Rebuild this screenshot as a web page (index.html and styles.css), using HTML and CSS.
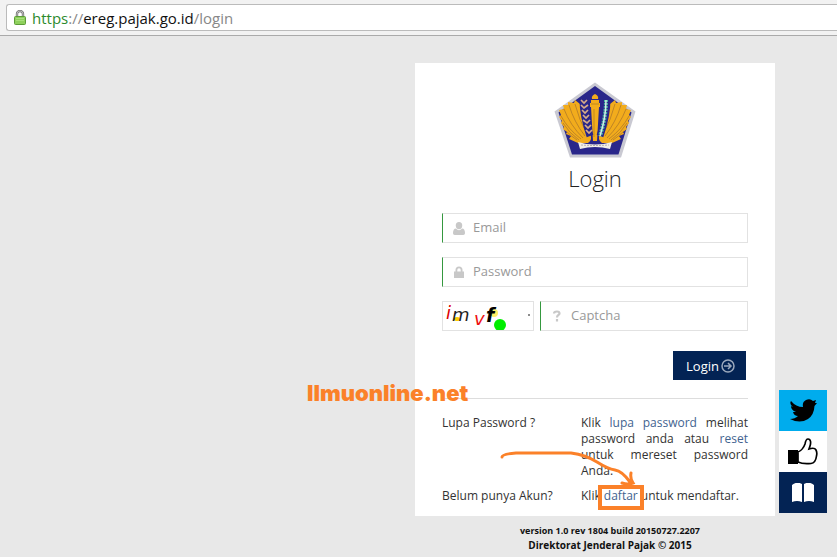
FILE: index.html
```html
<!DOCTYPE html>
<html lang="id">
<head>
<meta charset="utf-8">
<title>Login</title>
<link rel="stylesheet" href="styles.css">
</head>
<body>

<header class="browser-bar">
    <div class="address">
        <svg class="secure" width="12" height="15" viewBox="0 0 12 15">
            <path d="M3 7V4a3 3 0 0 1 6 0v3" fill="none" stroke="#777" stroke-width="2.4"/>
            <path d="M3 7V4a3 3 0 0 1 6 0v3" fill="none" stroke="#ccc" stroke-width="0.8"/>
            <rect x="0.5" y="6.5" width="11" height="8" rx="1" fill="#8ed05c" stroke="#5c9c38"/>
            <path d="M2 8.5h8M2 10.5h8" stroke="#a8e07c"/>
        </svg>
        <span class="url"><span class="scheme">https</span>://<span class="host">ereg.pajak.go.id</span>/login</span>
    </div>
</header>

<main class="page">
    <div class="panel">
        <section class="card">
            <svg class="emblem" width="82" height="76" viewBox="0 0 82 76">
                <path d="M41 0.5L81.5 29.5L67 75.5H16L0.5 29.5Z" fill="#c9c9d2"/>
                <path d="M41 4L77.5 30.5L64.5 72.5H18L4.5 30.5Z" fill="#29268a"/>
                <g id="wing">
                    <path d="M26 22L21 18L20 21L14 20L14 23L9 23L10 27L5 28L7 33L5 35L8 39L7 41L10 45L9 47L13 50L12 52L17 54L15 57L24 61L34 61Q39 58 36 51Q34 44 31 39Q28 31 26 22Z" fill="#f2ac1c"/>
                    <path d="M21 22Q25 38 33 52M15 23Q20 40 31 54M10 27Q16 43 29 56M7 34Q14 47 27 57M9 41Q15 51 25 58M12 49Q17 54 23 58" fill="none" stroke="#a8732a" stroke-width="0.7"/>
                </g>
                <use href="#wing" transform="translate(82 0) scale(-1 1)"/>
                <path d="M37 18h8v3h1v4h-1l-2 34h-4l-2-34h-1v-4h1Z" fill="#f2ac1c"/>
                <path d="M38 17q-1-3 3-5q4 2 3 5Z" fill="#f2ac1c"/>
                <path d="M37 22h8M40 27v28" fill="none" stroke="#ad7a20" stroke-width="0.7"/>
                <path d="M29 17Q29 34 36 54" fill="none" stroke="#29268a" stroke-width="7"/>
                <path d="M27 18l3 3l3-3M27 23l3 3l4-3M28 28l3 3l3-3M29 33l3 3l3-3M29 38l4 3l3-3M31 43l3 3l3-3M32 48l3 3l3-3" fill="none" stroke="#d7ab88" stroke-width="1.7"/>
                <path d="M53 17Q53 34 46 54" fill="none" stroke="#29268a" stroke-width="7"/>
                <path d="M52 18Q52 35 46 54" fill="none" stroke="#45b9a0" stroke-width="4" stroke-dasharray="2 1"/>
                <path d="M52 18Q52 35 46 54" fill="none" stroke="#d3ebe6" stroke-width="1.5"/>
                <path d="M24 60q17 5 34 0l-2 7q-15-4-30 0Z" fill="#f1eee7"/>
                <path d="M27 63q14 1 28 0" fill="none" stroke="#b5adb0" stroke-width="1" stroke-dasharray="2 1"/>
            </svg>
            <h1>Login</h1>

            <form class="login-form">
                <div class="field">
                    <svg width="12" height="13" viewBox="0 0 12 13"><path d="M6 0a3.200 3.200 0 0 1 3.200 3.700c0 2-1.200 3.600-3.200 3.600S2.800 5.700 2.800 3.700A3.200 3.200 0 0 1 6 0ZM3 6.500C4 7.800 5 8.200 6 8.200s2-.4 3-1.700c2 0 3 2 3 4.500c0 1.200-.6 2-1.800 2H1.800C.6 13 0 12.200 0 11c0-2.500 1-4.500 3-4.500Z"/></svg>
                    <input type="email" placeholder="Email" aria-label="Email">
                </div>
                <div class="field">
                    <svg width="12" height="12" viewBox="0 0 12 12"><path d="M1 5.500H2.500V4a3.500 3.500 0 0 1 7 0V5.500H11V12H1ZM4.300 5.500H7.700V4a1.700 1.700 0 0 0-3.400 0Z" fill-rule="evenodd"/></svg>
                    <input type="password" placeholder="Password" aria-label="Password">
                </div>
                <div class="captcha-row">
                    <div class="captcha">
                        <svg width="90" height="28" viewBox="0 0 90 28" role="img" aria-label="imvf">
                            <ellipse cx="14" cy="17" rx="3" ry="2" fill="#fc0"/>
                            <circle cx="51" cy="11" r="4" fill="#fe6"/>
                            <text x="3" y="17" fill="#d00" font-size="18">i</text>
                            <text x="9" y="19" fill="#222" font-size="18">m</text>
                            <text x="31" y="23" fill="#e11" font-size="18">v</text>
                            <text x="43" y="20" fill="#000" font-size="19" font-weight="bold">f</text>
                            <circle cx="57" cy="23" r="6" fill="#0e0"/>
                            <circle cx="86" cy="13" r="1" fill="#666"/>
                        </svg>
                    </div>
                    <div class="field">
                        <svg width="12" height="12" viewBox="0 0 12 12"><path d="M3 3.500Q3 1.500 6 1.500Q8.500 1.500 8.500 3.500C8.500 5 6 5 6 7.500M6 9V11.500" fill="none" stroke="#c8c8c8" stroke-width="2.200"/></svg>
                        <input type="text" placeholder="Captcha" aria-label="Captcha">
                    </div>
                </div>
                <button class="submit" type="submit">
                    Login
                    <svg width="14" height="14" viewBox="0 0 14 14" fill="none" stroke="#9ca9bd" stroke-width="1.5"><circle cx="7" cy="7" r="6"/><path d="M3 7h7M7 4l3 3l-3 3"/></svg>
                </button>
            </form>

            <div class="help">
                <p>Lupa Password ?</p>
                <p class="answer">Klik <a href="#">lupa password</a> melihat password anda atau <a href="#">reset</a> untuk mereset password Anda.</p>
                <p>Belum punya Akun?</p>
                <p class="answer">Klik <a class="register" href="#">daftar</a> untuk mendaftar.</p>
            </div>

            <!-- arrow and box pointing at the register link -->
            <svg class="marker" width="150" height="62" viewBox="0 0 150 62" fill="none" stroke="#fb8129">
                <path d="M3 8Q3 5 17 4H72Q87 6 98 13T116 21T131 33M132 24Q131 30 134 34Q129 36 123 34" stroke-width="3" stroke-linecap="round"/>
                <rect x="101" y="38" width="42" height="21" stroke-width="4"/>
            </svg>
            <div class="watermark">Ilmuonline.net</div>
        </section>

        <nav class="side">
            <a class="twitter" href="#" aria-label="Twitter">
                <svg width="28" height="24" viewBox="0 0 28 24"><path d="M2 2Q7 8 14 8Q13 3 17 1Q21-1 24 2L27 1L26 4L28 4L25.500 7Q25 16 19 20Q11 25 1 20Q6 20 9 17Q5 17 4 13L7 13Q2 11 2 7L4 8Q0 5 2 2Z"/></svg>
            </a>
            <a class="like" href="#" aria-label="Like">
                <svg width="30" height="27" viewBox="0 0 30 27"><path d="M0 12H10V26H0Z"/><path d="M10 14C13 13 16 9 17 6C17.500 3 18 1 20 1C23 1 23 5 22 8L21 11C24 10 27 10 28 12C29 14 29 16 28.500 18C28 22 27 25 23 25.500C18 26 14 26 10 24Z" fill="#fff" stroke="#000" stroke-width="1.700"/></svg>
            </a>
            <a class="guide" href="#" aria-label="Panduan">
                <svg width="22" height="20" viewBox="0 0 22 20" fill="#fff"><path d="M0 2Q5-2 10 1V19Q5 17 0 19ZM12 1Q17-2 22 2V19Q17 17 12 19Z"/></svg>
            </a>
        </nav>
    </div>

    <footer class="version">
        <p>version 1.0 rev 1804 build 20150727.2207</p>
        <p class="owner">Direktorat Jenderal Pajak © 2015</p>
    </footer>
</main>

</body>
</html>
```

FILE: styles.css
```css
* {
    box-sizing: border-box;
}
body {
    margin: 0;
    background: #e8e8e8;
    color: #333;
    font-family: "Open Sans", sans-serif;
    font-size: 12px;
    line-height: 16px;
}
p {
    margin: 0;
}
svg {
    display: block;
    flex: none;
}
a {
    color: #42638f;
    text-decoration: none;
}
.browser-bar {
    padding: 4px 0 4px 6px;
    background: #f2f2f2;
    border-bottom: 1px solid #aaa;
}
.address {
    display: flex;
    align-items: center;
    gap: 6px;
    height: 27px;
    padding-left: 7px;
    background: #fff;
    border: 1px solid #bbb;
    border-right: 0;
    border-radius: 3px 0 0 3px;
}
.url {
    color: #888;
    font-size: 15px;
}
.scheme {
    color: #2c8a2c;
}
.host {
    color: #111;
}
.page {
    padding-top: 27px;
}
.panel {
    display: flex;
    justify-content: flex-end;
    align-items: flex-end;
    gap: 4px;
    padding-right: 10px;
}
.card {
    position: relative;
    width: 360px;
    padding: 19px 27px 12px;
    background: #fff;
}
.emblem {
    margin: 0 auto;
}
h1 {
    margin: 5px 0 19px;
    font-size: 22px;
    font-weight: 300;
    line-height: 31px;
    text-align: center;
    color: #222;
}
.login-form {
    display: flex;
    flex-direction: column;
    gap: 14px;
}
.field {
    display: flex;
    align-items: center;
    flex: 1;
    min-width: 0;
    gap: 8px;
    height: 30px;
    padding-left: 10px;
    border: 1px solid #e2e2e2;
    border-left: 1px solid #35983f;
    fill: #c8c8c8;
}
.field input {
    flex: 1;
    min-width: 0;
    height: 28px;
    padding: 0 0 2px;
    border: 0;
    outline: 0;
    background: none;
    font: 13px "Open Sans", sans-serif;
}
.field input::placeholder {
    color: #999;
}
.login-form > .field {
    flex: none;
}
.captcha-row {
    display: flex;
    gap: 6px;
}
.captcha {
    height: 30px;
    border: 1px solid #e2e2e2;
    font-family: "DejaVu Sans", sans-serif;
    font-style: italic;
}
.submit {
    display: flex;
    align-items: center;
    align-self: flex-end;
    gap: 2px;
    height: 29px;
    margin: 6px 2px 0 0;
    padding: 0 11px 0 13px;
    border: 0;
    background: #032354;
    color: #fff;
    font: 13px "Open Sans", sans-serif;
}
.help {
    display: grid;
    grid-template-columns: 139px 1fr;
    row-gap: 9px;
    margin-top: 18px;
    padding-top: 16px;
    border-top: 1px solid #ddd;
}
.answer {
    text-align: justify;
}
.marker {
    position: absolute;
    right: 126px;
    bottom: 5px;
}
.watermark {
    position: absolute;
    top: 318px;
    left: -108px;
    color: #fb8129;
    font: 900 22px/24px "Inter", sans-serif;
}
.side {
    width: 48px;
    margin-bottom: 3px;
}
.side a {
    display: flex;
    align-items: center;
    justify-content: center;
    height: 41px;
}
.twitter {
    background: #00aced;
}
.like {
    background: #fff;
}
.guide {
    background: #032354;
}
.version {
    width: 360px;
    margin: 8px 47px 0 auto;
    color: #111;
    font-size: 9px;
    font-weight: 700;
    line-height: 14px;
    text-align: center;
}
.owner {
    font-size: 10px;
}
```
